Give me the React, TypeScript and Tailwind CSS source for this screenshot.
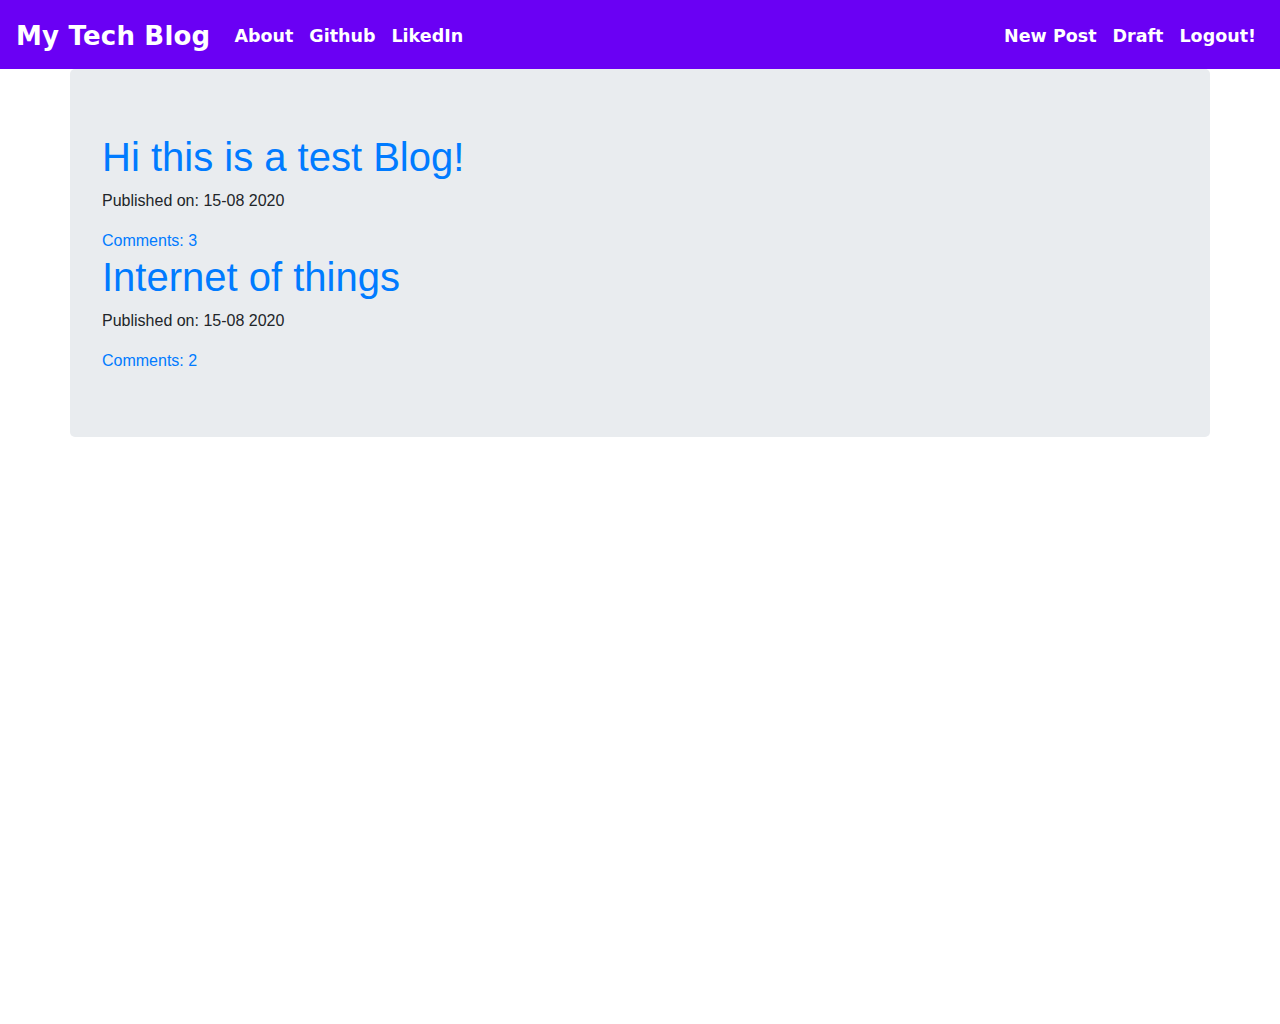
export default function App() {
  const posts = [
    { title: "Hi this is a test Blog!", date: "15-08 2020", comments: 3 },
    { title: "Internet of things", date: "15-08 2020", comments: 2 },
  ];
  return (
    <div className="min-h-screen bg-white font-['Liberation_Sans',Arial,sans-serif]">
      <nav className="flex h-[69px] items-center justify-between bg-[#6a00f4] px-4 pt-[3px] font-['DejaVu_Sans',sans-serif] font-bold text-white">
        <div className="flex items-center">
          <a href="#" className="mr-4 text-[26px] tracking-[0.2px]">My Tech Blog</a>
          <a href="#" className="px-2 text-[17.5px]">About</a>
          <a href="#" className="px-2 text-[17.5px]">Github</a>
          <a href="#" className="px-2 text-[17.5px]">LikedIn</a>
        </div>
        <div className="flex items-center">
          <a href="#" className="px-2 text-[17.5px]">New Post</a>
          <a href="#" className="px-2 text-[17.5px]">Draft</a>
          <a href="#" className="px-2 text-[17.5px]">Logout!</a>
        </div>
      </nav>
      <div className="mx-auto w-[1140px] rounded-[5px] bg-[#e9ecef] px-8 py-16">
        {posts.map((p) => (
          <div key={p.title}>
            <h1 className="mb-2 text-[40px] leading-[48px] text-[#007bff]">{p.title}</h1>
            <p className="mb-4 text-base leading-6 text-[#212529]">Published on: {p.date}</p>
            <a href="#" className="block text-base leading-6 text-[#007bff]">Comments: {p.comments}</a>
          </div>
        ))}
      </div>
    </div>
  );
}
